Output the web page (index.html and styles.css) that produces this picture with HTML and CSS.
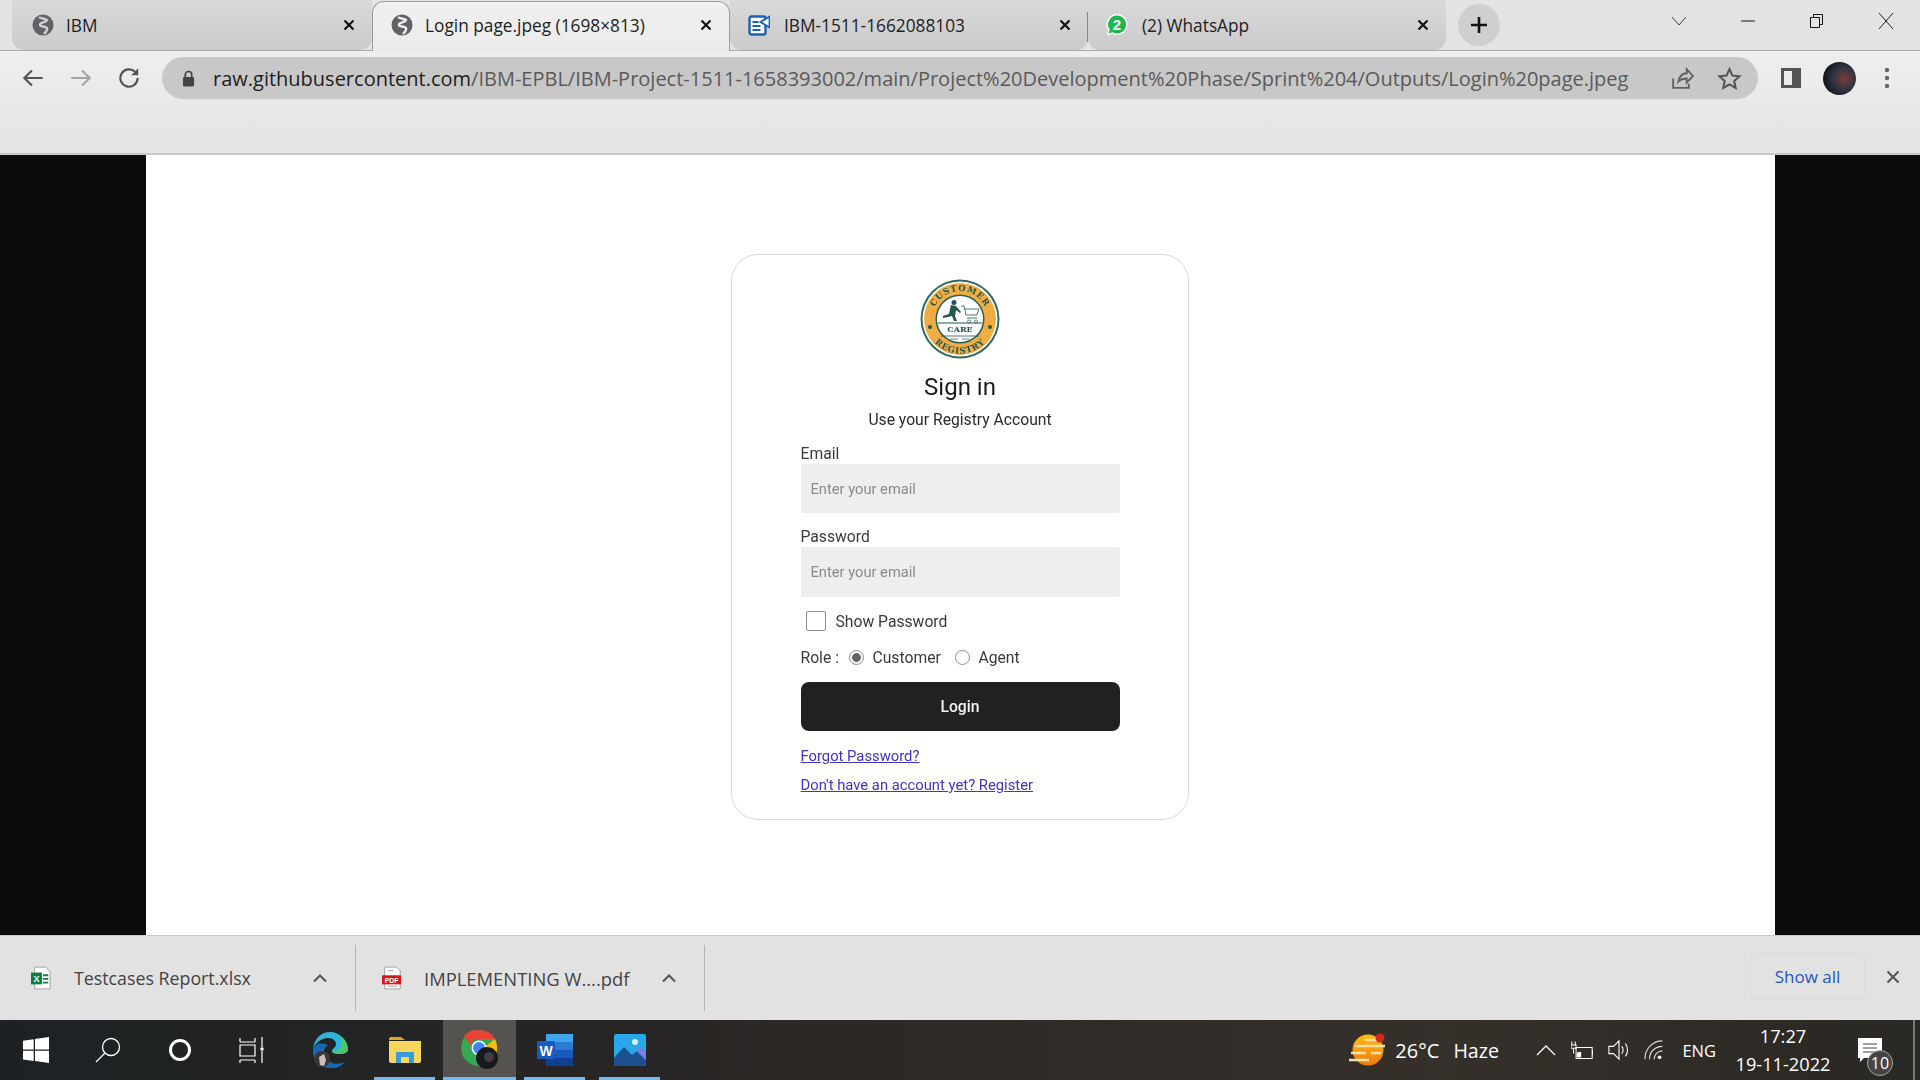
FILE: index.html
```html
<!DOCTYPE html>
<html>
<head>
<title>Login page.jpeg (1698×813)</title>
<link rel="stylesheet" href="styles.css">
</head>
<body>
<header class="tabstrip">
    <div class="tab">
        <svg class="favicon" viewBox="0 0 22 22"><circle cx="11" cy="11" r="10.5" fill="#5f6368"/><path d="M7 3c2 2 5 1 8 3-1 3-7 2-7 5 0 2 5 1 7 3 1 2-1 4-3 6" fill="none" stroke="#cfcfcf" stroke-width="2.400"/></svg>
        <span class="tab-title">IBM</span>
        <svg class="tab-close" viewBox="0 0 12 12"><path d="M1.5 1.5l9 9M10.5 1.5l-9 9"/></svg>
    </div>
    <div class="tab active">
        <svg class="favicon" viewBox="0 0 22 22"><circle cx="11" cy="11" r="10.5" fill="#5f6368"/><path d="M7 3c2 2 5 1 8 3-1 3-7 2-7 5 0 2 5 1 7 3 1 2-1 4-3 6" fill="none" stroke="#ededed" stroke-width="2.400"/></svg>
        <span class="tab-title">Login page.jpeg (1698×813)</span>
        <svg class="tab-close" viewBox="0 0 12 12"><path d="M1.5 1.5l9 9M10.5 1.5l-9 9"/></svg>
    </div>
    <div class="tab">
        <svg class="favicon" viewBox="0 0 22 22"><rect x="1.500" y="2.500" width="16" height="18" rx="2" fill="#fff" stroke="#1a62b8" stroke-width="2.400"/><path d="M4.500 8h6M4.500 12h8M4.500 16h8" stroke="#1a62b8" stroke-width="1.800"/><path d="M21.500 2.500l-9 5.500 9 5.500z" fill="#fff" stroke="#1a62b8" stroke-width="1.800"/></svg>
        <span class="tab-title">IBM-1511-1662088103</span>
        <svg class="tab-close" viewBox="0 0 12 12"><path d="M1.5 1.5l9 9M10.5 1.5l-9 9"/></svg>
        <span class="tab-sep"></span>
    </div>
    <div class="tab">
        <svg class="favicon" viewBox="0 0 22 22"><path d="M11 0a10.500 10.500 0 0 1 0 21c-2 0-3.500-.5-5-1.300L.8 21.500l1.600-5A10.500 10.500 0 0 1 11 0z" fill="#fff"/><path d="M11 1.500a9 9 0 1 1-4.600 16.700L2.500 19.500l1.300-3.700A9 9 0 0 1 11 1.500z" fill="#1fb84f"/><text x="11" y="16" class="wa-count">2</text></svg>
        <span class="tab-title">(2) WhatsApp</span>
        <svg class="tab-close" viewBox="0 0 12 12"><path d="M1.5 1.5l9 9M10.5 1.5l-9 9"/></svg>
    </div>
    <div class="newtab"><svg viewBox="0 0 20 20" width="20" height="20"><path d="M10 2v16M2 10h16" stroke="#111" stroke-width="2.600"/></svg></div>
    <div class="window-controls">
        <svg viewBox="0 0 16 16" width="16" height="16"><path d="M1 4l7 8 7-8" fill="none" stroke="#444" stroke-width="1"/></svg>
        <svg viewBox="0 0 16 16" width="16" height="16"><path d="M1 8h14" stroke="#111" stroke-width="1"/></svg>
        <svg viewBox="0 0 16 16" width="16" height="16"><path d="M1.500 4.500h9v10h-9zM4.500 4.500v-3h9v10h-3" fill="none" stroke="#111" stroke-width="1"/></svg>
        <svg viewBox="0 0 16 16" width="16" height="16"><path d="M1 0l14 16M15 0L1 16" stroke="#222" stroke-width="1"/></svg>
    </div>
</header>

<nav class="toolbar">
    <div class="toolbar-row">
        <svg class="nav-icon" viewBox="0 0 24 24"><path d="M21 12H4M11 5l-7 7 7 7" fill="none" stroke="#555" stroke-width="2"/></svg>
        <svg class="nav-icon" viewBox="0 0 24 24"><path d="M3 12h17M13 5l7 7-7 7" fill="none" stroke="#a4a4a4" stroke-width="2"/></svg>
        <svg class="nav-icon" viewBox="0 0 24 24"><path d="M20 12a8 8 0 1 1-2.400-5.700" fill="none" stroke="#555" stroke-width="2"/><path d="M20.500 3v6.500H14z" fill="#555"/></svg>
        <div class="omnibox">
            <svg class="lock" viewBox="0 0 14 18"><path d="M3.500 8V5a3.500 3.500 0 0 1 7 0v3" fill="none" stroke="#444" stroke-width="1.800"/><rect x="1" y="7.500" width="12" height="10" rx="1.500" fill="#444"/></svg>
            <div class="url"><span class="url-host">raw.githubusercontent.com</span>/IBM-EPBL/IBM-Project-1511-1658393002/main/Project%20Development%20Phase/Sprint%204/Outputs/Login%20page.jpeg</div>
            <svg class="omni-icon" viewBox="0 0 24 24"><path d="M4 12v9h15v-4M9 15c1-5 4-8 8-8V3l6 6.500-6 6.500v-4c-3 0-6 1-8 3z" fill="none" stroke="#606060" stroke-width="1.800"/></svg>
            <svg class="omni-icon" viewBox="0 0 24 24"><path d="M12 3l2.800 6.200 6.700.7-5 4.500 1.400 6.600-5.900-3.400L6 21l1.400-6.600-5-4.500 6.800-.7z" fill="none" stroke="#555" stroke-width="2"/></svg>
        </div>
        <svg class="panel-icon" viewBox="0 0 20 20"><rect x="1.500" y="1.500" width="17" height="17" fill="none" stroke="#555" stroke-width="3"/><rect x="11" y="2" width="7" height="16" fill="#555"/></svg>
        <div class="avatar"></div>
        <svg class="menu-icon" viewBox="0 0 6 22"><circle cx="3" cy="3" r="2.200"/><circle cx="3" cy="11" r="2.200"/><circle cx="3" cy="19" r="2.200"/></svg>
    </div>
</nav>

<main class="viewer">
    <div class="photo">
        <section class="card">
            <svg class="logo" viewBox="0 0 80 80">
                <defs>
                    <path id="arcTop" d="M12 40a28 28 0 0 1 56 0"/>
                    <path id="arcBottom" d="M5.500 40a34.500 34.500 0 0 0 69 0"/>
                </defs>
                <circle cx="40" cy="40" r="39.500" fill="#2f6a62"/>
                <circle cx="40" cy="40" r="37.500" fill="#fff"/>
                <circle cx="40" cy="40" r="36" fill="#f0ad42"/>
                <circle cx="40" cy="40" r="24.500" fill="#2f5f58"/>
                <circle cx="40" cy="40" r="23" fill="#fff"/>
                <text class="logo-ring"><textPath href="#arcTop" startOffset="50%">CUSTOMER</textPath></text>
                <text class="logo-ring"><textPath href="#arcBottom" startOffset="50%">REGISTRY</textPath></text>
                <path d="M34 21a2.500 2.500 0 1 1 0 5 2.500 2.500 0 0 1 0-5zM31 26l5 1 5 6-1 1-4-3-1 6 2 5h-3l-2-5-4 1-5 1v-2l6-2 1-5z" fill="#23544d"/>
                <path d="M41 27h3l2 9h11l2-6H45M47 39h10M49 41a1.500 1.500 0 1 0 .1 0M56 41a1.500 1.500 0 1 0 .1 0" fill="none" stroke="#4a7a72" stroke-width="1"/>
                <path d="M18 44h44" stroke="#23544d" stroke-width="1"/>
                <text class="logo-care" x="40" y="52.500">CARE</text>
                <path d="M21 57h38" stroke="#23544d" stroke-width=".8"/>
                <path d="M30 60h8M42 60h8" stroke="#6f8f89" stroke-width="1"/>
                <circle cx="10" cy="48" r="2" fill="#23544d"/>
                <circle cx="70" cy="48" r="2" fill="#23544d"/>
            </svg>
            <h1 class="card-title">Sign in</h1>
            <p class="card-sub">Use your Registry Account</p>
            <div class="form">
                <div class="field-label first">Email</div>
                <div class="field-input">Enter your email</div>
                <div class="field-label second">Password</div>
                <div class="field-input tall">Enter your email</div>
                <div class="show-row"><span class="checkbox"></span><span>Show Password</span></div>
                <div class="role-row">
                    <span class="role-label">Role :</span>
                    <span class="radio checked"></span><span class="role-name">Customer</span>
                    <span class="radio"></span><span>Agent</span>
                </div>
                <div class="login-btn">Login</div>
                <a class="form-link first">Forgot Password?</a>
                <a class="form-link">Don't have an account yet? Register</a>
            </div>
        </section>
    </div>
</main>

<footer class="downloads">
    <div class="dl-item">
        <svg class="dl-file" viewBox="0 0 22 26"><path d="M4 1h12l5 5v19H4z" fill="#fff" stroke="#999"/><path d="M13 9h6v2h-6zM13 13h6v2h-6zM13 17h6v2h-6z" fill="#1d7a45"/><rect x="0" y="7" width="12" height="13" fill="#107c41"/><text class="xls-x" x="6" y="17.500">X</text></svg>
        <span class="dl-name">Testcases Report.xlsx</span>
        <svg class="dl-caret" viewBox="0 0 16 10"><path d="M2 8.500l6-6 6 6" fill="none" stroke="#555" stroke-width="2"/></svg>
    </div>
    <div class="dl-item">
        <svg class="dl-file" viewBox="0 0 22 26"><path d="M3 1h13l4 4v20H3z" fill="#fff" stroke="#999"/><path d="M6 5h7M6 22h11" stroke="#999"/><rect x="0" y="10" width="21" height="10" fill="#d31a1a"/><text class="pdf-tag" x="10.500" y="18">PDF</text></svg>
        <span class="dl-name">IMPLEMENTING W....pdf</span>
        <svg class="dl-caret" viewBox="0 0 16 10"><path d="M2 8.500l6-6 6 6" fill="none" stroke="#555" stroke-width="2"/></svg>
    </div>
    <div class="dl-spacer"></div>
    <div class="show-all">Show all</div>
    <svg class="dl-close" viewBox="0 0 14 14"><path d="M1.500 1.500l11 11M12.500 1.500l-11 11" stroke="#555" stroke-width="2"/></svg>
</footer>

<footer class="taskbar">
    <div class="task-item"><svg viewBox="0 0 26 26" width="26" height="26"><path d="M0 3.800l10.700-1.500v10.200H0zM12 2.100L26 0v12.500H12zM0 13.800h10.700V24L0 22.500zM12 13.800h14V26l-14-2z" fill="#fff"/></svg></div>
    <div class="task-item"><svg viewBox="0 0 26 26" width="26" height="26"><circle cx="16" cy="10" r="8.500" fill="none" stroke="#fff" stroke-width="1.300"/><path d="M10 16L1 25" stroke="#fff" stroke-width="1.300"/></svg></div>
    <div class="task-item"><svg viewBox="0 0 26 26" width="26" height="26"><circle cx="13" cy="13" r="9.500" fill="none" stroke="#fff" stroke-width="3"/></svg></div>
    <div class="task-item"><svg viewBox="0 0 26 26" width="26" height="26"><path d="M1 5h15M1 1v4M16 1v4M1 8h15v11H1zM1 23h15M1 23v3M16 23v3M23 0v10M23 14v12" fill="none" stroke="#fff" stroke-width="1.200"/><rect x="21.500" y="10.500" width="3" height="3" fill="#fff"/></svg></div>
    <div class="task-item app edge"><svg viewBox="0 0 36 36" width="36" height="36"><path d="M1 17C2 7 9 0 18 0c10 0 17 8 18 17 0 3-3 5-9 5-4 0-7-1-7-3 0-3 4-3 4-7 0-3-3-6-8-6-7 0-13 5-15 11z" fill="#2fb3d8"/><path d="M28 4c5 3 8 8 8 13 0 3-3 5-9 5-4 0-7-1-7-3 3 1 13 0 8-15z" fill="#4cc76f"/><path d="M1 17c-1 8 4 18 15 19 7 1 13-1 17-6-6 3-15 2-19-3C10 22 12 15 16 13 9 10 3 12 1 17z" fill="#1668b5"/><circle cx="10" cy="27" r="8" fill="#3c3734"/><path d="M7 25l5-3 2 6-2 6-4-1z" fill="#c9c2bc"/></svg></div>
    <div class="task-item app under"><svg viewBox="0 0 32 26" width="32" height="26"><path d="M0 2a2 2 0 0 1 2-2h10l4 3H0z" fill="#e0a526"/><path d="M0 4h32v20a2 2 0 0 1-2 2H2a2 2 0 0 1-2-2z" fill="#f9d65c"/><path d="M7 26V15h18v11h-5v-6h-8v6z" fill="#3a9bd9"/></svg></div>
    <div class="task-item app under current"><svg viewBox="0 0 38 40" width="38" height="40"><circle cx="18" cy="18" r="18" fill="#34a853"/><path d="M18 0a18 18 0 0 1 16 9H18a9 9 0 0 0-8.500 6L3 6A18 18 0 0 1 18 0z" fill="#ea4335"/><path d="M34 9a18 18 0 0 1-7 24l-7-11a8 8 0 0 0 5-6z" fill="#fbbc05"/><circle cx="18" cy="18" r="7.500" fill="#fff"/><circle cx="18" cy="18" r="6" fill="#4285f4"/><circle cx="26" cy="28" r="11" fill="#1a1a1e"/><circle cx="28" cy="27" r="5" fill="#34404c"/><circle cx="29" cy="27" r="2" fill="#6a2f2a"/></svg></div>
    <div class="task-item app under"><svg viewBox="0 0 36 32" width="36" height="32"><path d="M9 2a2 2 0 0 1 2-2h23a2 2 0 0 1 2 2v28a2 2 0 0 1-2 2H11a2 2 0 0 1-2-2z" fill="#2b7cd3"/><path d="M9 0h27v8H9z" fill="#41a5ee"/><path d="M9 16h27v8H9z" fill="#185abd"/><path d="M9 24h27v6a2 2 0 0 1-2 2H11a2 2 0 0 1-2-2z" fill="#103f91"/><rect x="0" y="7" width="18" height="18" rx="1.500" fill="#185abd"/><text class="word-w" x="9" y="21.500">W</text></svg></div>
    <div class="task-item app under"><svg viewBox="0 0 32 32" width="32" height="32"><rect width="32" height="32" rx="2" fill="#26a8ea"/><circle cx="21" cy="8" r="3" fill="#d5f0fc"/><path d="M0 24l10-11 8 8 5-4 9 9v4a2 2 0 0 1-2 2H2a2 2 0 0 1-2-2z" fill="#1b4f8f"/><path d="M18 21l5-4 9 9v-8l-6-5z" fill="#7a7fe0"/></svg></div>
    <div class="task-spacer"></div>
    <svg class="weather" viewBox="0 0 36 36"><defs><linearGradient id="sun" x1="0" y1="0" x2="0" y2="1"><stop offset="0" stop-color="#fdbb14"/><stop offset="1" stop-color="#ee7a0c"/></linearGradient></defs><circle cx="19" cy="18" r="15.500" fill="url(#sun)"/><path d="M0 28h20M2 21h15M6 14h30M16 8h12M22 21h10" stroke="#f3dfa8" stroke-width="2.500"/><circle cx="31" cy="6" r="4.500" fill="#cf2a1d"/></svg>
    <div class="temp">26°C</div>
    <div class="haze">Haze</div>
    <svg class="tray tray-first" viewBox="0 0 22 22"><path d="M2 16l9-9 9 9" fill="none" stroke="#fff" stroke-width="1.300"/></svg>
    <svg class="tray" viewBox="0 0 26 22"><path d="M6 8h19v13H6zM25 12h1v5" fill="none" stroke="#fff" stroke-width="1.200"/><path d="M7 14l5-1v7H7z" fill="#fff"/><path d="M1 1v4M5 1v4M0 5h6v4H0zM3 9v6" fill="none" stroke="#fff" stroke-width="1.200"/></svg>
    <svg class="tray" viewBox="0 0 24 24"><path d="M1 8h5l6-6v20l-6-6H1zM15 8c2 2 2 6 0 8M19 5c3 4 3 10 0 14" fill="none" stroke="#fff" stroke-width="1.200"/></svg>
    <svg class="tray" viewBox="0 0 24 24"><path d="M1 22C1 10 10 2 20 2M6 22c0-8 6-14 14-14M11 22c0-5 4-9 9-9" fill="none" stroke="#ddd" stroke-width="1.200"/><circle cx="17" cy="20" r="2" fill="#fff"/></svg>
    <div class="eng">ENG</div>
    <div class="clock"><div>17:27</div><div>19-11-2022</div></div>
    <div class="notify">
        <svg viewBox="0 0 24 24" width="24" height="24"><path d="M0 0h24v20H6l-4 4v-4H0z" fill="#fff"/><path d="M5 6h14M5 10h14M5 14h14" stroke="#444" stroke-width="1.200"/></svg>
        <span class="notify-badge">10</span>
    </div>
    <div class="desktop-edge"></div>
</footer>
</body>
</html>
```

FILE: styles.css
```css
html, body {
    margin: 0;
    padding: 0;
    height: 100%;
}

body {
    display: flex;
    flex-direction: column;
    width: 100%;
    height: 1080px;
    overflow: hidden;
    font-family: "Open Sans", "Liberation Sans", sans-serif;
}

/* tabs */
.tabstrip {
    display: flex;
    align-items: flex-end;
    height: 50px;
    padding-left: 12px;
    background: #e3e3e3;
    border-bottom: 1px solid #a9a9a9;
}

.tab {
    position: relative;
    display: flex;
    align-items: center;
    width: 358px;
    height: 50px;
    padding: 0 17px 0 18px;
    box-sizing: border-box;
    background: linear-gradient(to bottom, #d9d9d9, #cbcbcb);
    border-radius: 0 0 12px 12px;
}

.tab:first-child {
    width: 360px;
    padding-left: 20px;
}

.tab.active {
    padding-bottom: 3px;
    margin-bottom: -1px;
    background: linear-gradient(to bottom, #f0f0f0, #ebebeb);
    border: 1px solid #9c9c9c;
    border-bottom: 0;
    border-radius: 12px 12px 0 0;
    z-index: 1;
}

.favicon {
    width: 22px;
    height: 22px;
    flex: none;
}

.wa-count {
    font-family: "Liberation Sans", sans-serif;
    font-size: 15px;
    font-weight: bold;
    fill: #fff;
    text-anchor: middle;
}

.tab-title {
    flex: 1;
    margin-left: 12px;
    font-size: 17.300px;
    color: #222;
    white-space: nowrap;
}

.tab.active ~ .tab .tab-title {
    margin-left: 14px;
}

.tab-close {
    width: 12px;
    height: 12px;
    flex: none;
    fill: none;
    stroke: #111;
    stroke-width: 2.200;
}

.tab-sep {
    position: absolute;
    right: 0;
    top: 12px;
    width: 1px;
    height: 30px;
    background: #888;
}

.newtab {
    display: flex;
    align-items: center;
    justify-content: center;
    width: 42px;
    height: 42px;
    margin: 0 0 4px 12px;
    border-radius: 50%;
    background: #cfcfcf;
}

.window-controls {
    display: flex;
    flex: 1;
    align-self: flex-start;
    gap: 53px;
    margin-top: 13px;
    padding-left: 171px;
}

/* toolbar */
.toolbar {
    height: 102px;
    background: linear-gradient(to bottom, #eeeeee, #e4e4e4);
    border-bottom: 2px solid #c8c8c8;
}

.toolbar-row {
    display: flex;
    align-items: center;
    height: 42px;
    padding-top: 6px;
}

.nav-icon {
    width: 26px;
    height: 26px;
    margin-left: 22px;
    flex: none;
}

.nav-icon:first-child {
    margin-left: 20px;
}

.omnibox {
    display: flex;
    align-items: center;
    width: 1596px;
    height: 42px;
    margin-left: 20px;
    padding: 0 16px 0 20px;
    box-sizing: border-box;
    background: #c8c8c8;
    border-radius: 21px;
}

.lock {
    width: 13px;
    height: 17px;
    flex: none;
}

.url {
    flex: 1;
    min-width: 0;
    margin-left: 18px;
    font-size: 20px;
    color: #5a5a5a;
    white-space: nowrap;
}

.url-host {
    color: #1e1e1e;
}

.omni-icon {
    width: 25px;
    height: 25px;
    flex: none;
    margin-left: 23px;
}

.panel-icon {
    width: 20px;
    height: 20px;
    flex: none;
    margin-left: 23px;
}

.avatar {
    width: 33px;
    height: 33px;
    flex: none;
    margin-left: 22px;
    border-radius: 50%;
    background: radial-gradient(circle at 65% 50%, #7a3a3a 0, #2c3440 45%, #0e1216 80%);
}

.menu-icon {
    width: 6px;
    height: 22px;
    flex: none;
    margin-left: 28px;
    fill: #666;
}

/* image on black */
.viewer {
    flex: 1;
    display: flex;
    justify-content: center;
    background: #0c0c0c;
}

.photo {
    display: flex;
    justify-content: center;
    align-items: flex-start;
    width: 1629px;
    background: #fff;
}

.card {
    display: flex;
    flex-direction: column;
    align-items: center;
    width: 458px;
    height: 566px;
    margin-top: 99px;
    padding-top: 24px;
    box-sizing: border-box;
    border: 1px solid #d9d9d9;
    border-radius: 27px;
    font-family: Roboto, "Liberation Sans", sans-serif;
    filter: blur(0.35px);
}

.logo {
    width: 80px;
    height: 80px;
    flex: none;
}

.logo-ring {
    font-family: "DejaVu Serif", serif;
    font-size: 8.500px;
    font-weight: bold;
    letter-spacing: 0.800px;
    fill: #23544d;
    text-anchor: middle;
}

.logo-care {
    font-family: "DejaVu Serif", serif;
    font-size: 8px;
    font-weight: bold;
    fill: #23544d;
    text-anchor: middle;
}

.card-title {
    margin: 13px 0 0;
    font-size: 24px;
    line-height: 30px;
    font-weight: 400;
    color: #1c1c1c;
}

.card-sub {
    margin: 9px 0 0;
    font-size: 15.700px;
    line-height: 18px;
    color: #2a2a2a;
}

.form {
    display: flex;
    flex-direction: column;
    width: 319px;
    margin-top: 15px;
    font-size: 15.700px;
    color: #3a3a3a;
}

.field-label {
    line-height: 18px;
    height: 20px;
}

.field-label.first {
    line-height: 20px;
}

.field-label.second {
    margin-top: 15px;
    height: 19px;
}

.field-input {
    display: flex;
    align-items: center;
    height: 49px;
    padding-left: 10px;
    background: #eeeeee;
    border-radius: 2px;
    font-size: 14.700px;
    color: #8a8a8a;
}

.field-input.tall {
    height: 50px;
}

.show-row {
    display: flex;
    align-items: center;
    gap: 10px;
    height: 20px;
    margin-top: 14px;
    padding-left: 5px;
}

.checkbox {
    width: 18px;
    height: 18px;
    flex: none;
    border: 1px solid #8c8c8c;
    border-radius: 2px;
}

.role-row {
    display: flex;
    align-items: center;
    height: 20px;
    margin-top: 16px;
}

.role-label {
    width: 48px;
}

.radio {
    width: 13px;
    height: 13px;
    flex: none;
    margin-right: 9px;
    border: 1px solid #8c8c8c;
    border-radius: 50%;
    background: #fff;
}

.radio.checked {
    background: radial-gradient(circle, #666 0 4px, #fff 4.800px);
}

.role-name {
    width: 82px;
}

.login-btn {
    display: flex;
    align-items: center;
    justify-content: center;
    height: 49px;
    margin-top: 15px;
    background: #212121;
    border-radius: 8px;
    color: #f2f2f2;
    font-weight: 500;
}

.form-link {
    width: max-content;
    margin-top: 11px;
    line-height: 18px;
    font-size: 14.800px;
    color: #3d35c4;
    text-decoration: underline;
}

.form-link.first {
    margin-top: 16px;
}

/* download shelf */
.downloads {
    display: flex;
    align-items: center;
    height: 85px;
    box-sizing: border-box;
    background: #e2e2e2;
    border-top: 1px solid #c8c8c8;
}

.dl-item {
    display: flex;
    align-items: center;
    width: 356px;
    height: 66px;
    padding-left: 31px;
    margin-right: -30px;
    box-sizing: border-box;
    border-right: 1px solid #b5b5b5;
}

.dl-item + .dl-item {
    width: 379px;
    padding-left: 56px;
}

.dl-item + .dl-item .dl-name {
    font-size: 18.400px;
    margin-left: 22px;
}

.dl-file {
    width: 20px;
    height: 24px;
    flex: none;
}

.dl-name {
    flex: 1;
    margin-left: 23px;
    font-size: 17.800px;
    color: #444;
    white-space: nowrap;
}

.dl-caret {
    width: 16px;
    height: 10px;
    flex: none;
    margin-right: 27px;
}

.xls-x, .pdf-tag, .word-w {
    font-family: "Liberation Sans", sans-serif;
    font-weight: bold;
    fill: #fff;
    text-anchor: middle;
}

.xls-x {
    font-size: 10px;
}

.pdf-tag {
    font-size: 7.500px;
}

.word-w {
    font-size: 14px;
}

.dl-spacer {
    flex: 1;
}

.show-all {
    display: flex;
    align-items: center;
    justify-content: center;
    width: 115px;
    height: 47px;
    margin-bottom: 3px;
    box-sizing: border-box;
    border: 1px solid #dcdcdc;
    border-radius: 4px;
    font-size: 17px;
    color: #1f58c0;
    font-weight: 500;
}

.dl-close {
    width: 14px;
    height: 14px;
    flex: none;
    margin: 0 20px 2px 21px;
}

/* windows taskbar */
.taskbar {
    display: flex;
    align-items: center;
    height: 60px;
    background: linear-gradient(to right, #1d2123 0%, #2a2725 40%, #35302a 75%, #2a2824 100%);
    color: #fff;
}

.task-item {
    position: relative;
    display: flex;
    align-items: center;
    justify-content: center;
    width: 72px;
    height: 60px;
    flex: none;
}

.task-item.app {
    width: 73px;
    margin-left: 2px;
}

.task-item.edge {
    margin-left: 5px;
}

.task-item.under::after {
    content: '';
    position: absolute;
    left: 6px;
    right: 6px;
    bottom: 0;
    height: 3px;
    background: #76b9ed;
}

.task-item.current {
    background: #545350;
}

.task-item.current::after {
    left: 0;
    right: 0;
}

.task-spacer {
    flex: 1;
}

.weather {
    width: 36px;
    height: 36px;
    flex: none;
    margin-right: -3px;
}

.temp {
    margin-left: 13px;
    font-size: 20px;
}

.haze {
    margin-left: 14px;
    font-size: 19.600px;
}

.tray {
    width: 22px;
    height: 22px;
    flex: none;
    margin-left: 14.500px;
}

.tray-first {
    margin-left: 36px;
}

.eng {
    margin-left: 16px;
    font-size: 16.500px;
}

.clock {
    width: 134px;
    text-align: center;
    font-size: 18.200px;
    line-height: 28px;
}

.notify {
    position: relative;
    width: 24px;
    height: 24px;
    margin: 0 31px 0 8px;
}

.notify-badge {
    position: absolute;
    left: 9px;
    top: 12px;
    width: 26px;
    height: 26px;
    box-sizing: border-box;
    border: 1px solid #aaa;
    border-radius: 50%;
    background: #444;
    font-size: 16px;
    line-height: 24px;
    text-align: center;
}

.desktop-edge {
    width: 2px;
    height: 60px;
    background: #777;
    margin-right: 5px;
    flex: none;
}
```
